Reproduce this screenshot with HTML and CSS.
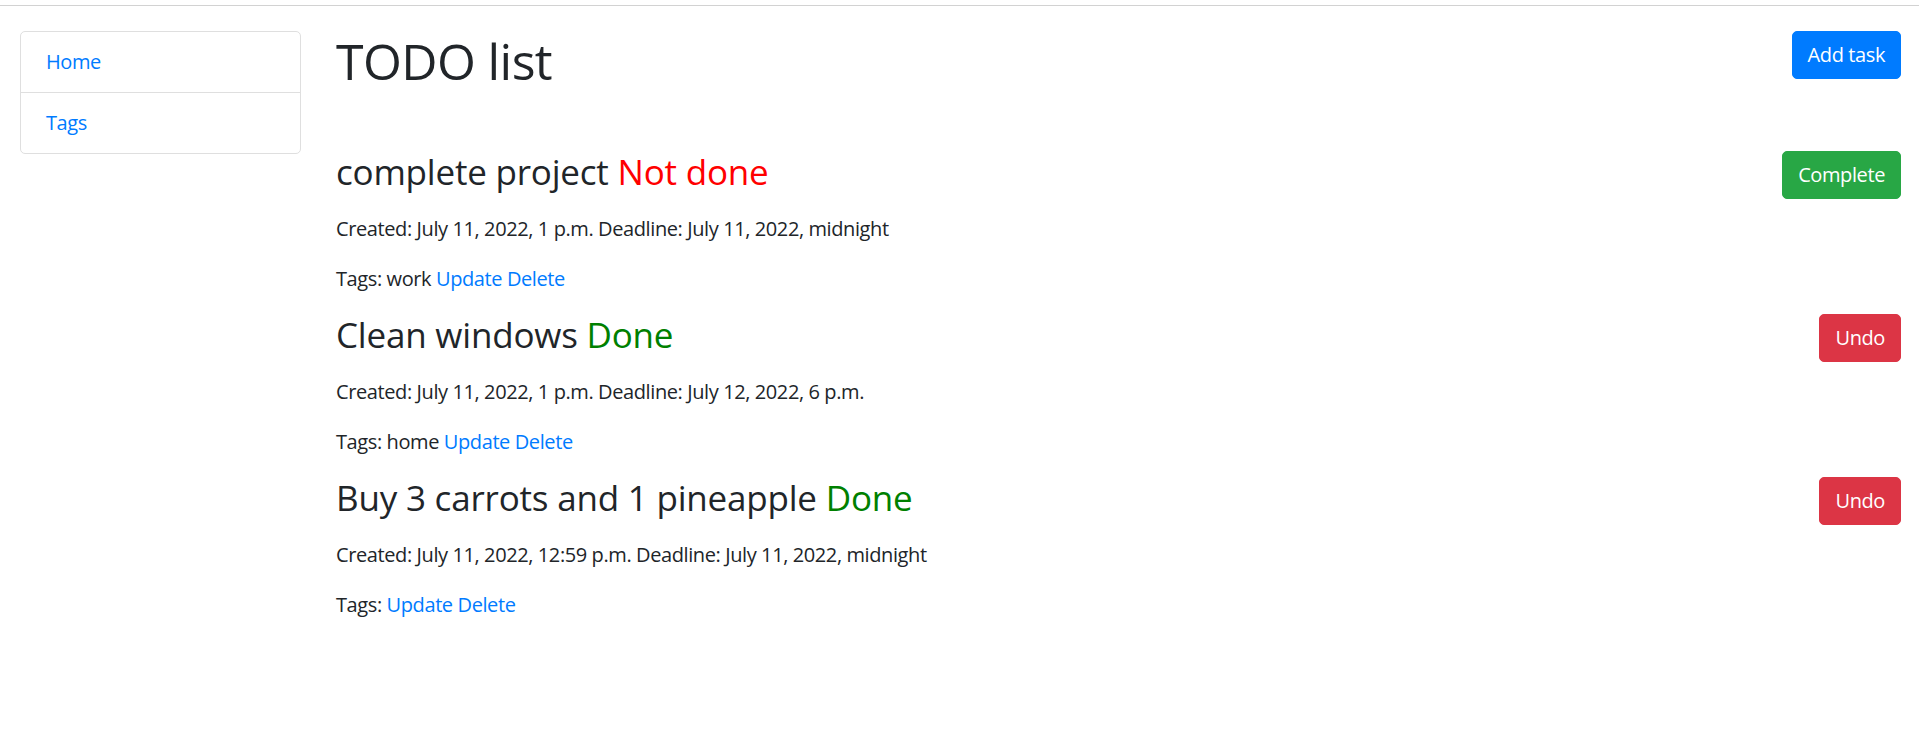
FILE: index.html
```html
<!DOCTYPE html>
<html lang="en">
<head>
<meta charset="utf-8">
<title>TODO list</title>
<link rel="stylesheet" href="styles.css">
</head>
<body>
<div class="topline"></div>
<div class="page">
  <aside class="sidebar">
    <ul class="list-group">
      <li class="list-item"><a href="#">Home</a></li>
      <li class="list-item"><a href="#">Tags</a></li>
    </ul>
  </aside>
  <main class="main">
    <div class="header">
      <h1 class="title">TODO list</h1>
      <a href="#" class="btn btn-primary">Add task</a>
    </div>
    <div class="tasks">
      <div class="task">
        <div class="task-head">
          <h3 class="task-title">complete project <span class="status-no">Not done</span></h3>
          <a href="#" class="btn btn-success">Complete</a>
        </div>
        <p class="meta">Created: July 11, 2022, 1 p.m. Deadline: July 11, 2022, midnight</p>
        <p class="meta">Tags: work <a href="#">Update</a> <a href="#">Delete</a></p>
      </div>
      <div class="task">
        <div class="task-head">
          <h3 class="task-title">Clean windows <span class="status-yes">Done</span></h3>
          <a href="#" class="btn btn-danger">Undo</a>
        </div>
        <p class="meta">Created: July 11, 2022, 1 p.m. Deadline: July 12, 2022, 6 p.m.</p>
        <p class="meta">Tags: home <a href="#">Update</a> <a href="#">Delete</a></p>
      </div>
      <div class="task">
        <div class="task-head">
          <h3 class="task-title">Buy 3 carrots and 1 pineapple <span class="status-yes">Done</span></h3>
          <a href="#" class="btn btn-danger">Undo</a>
        </div>
        <p class="meta">Created: July 11, 2022, 12:59 p.m. Deadline: July 11, 2022, midnight</p>
        <p class="meta">Tags: <a href="#">Update</a> <a href="#">Delete</a></p>
      </div>
    </div>
  </main>
</div>
</body>
</html>
```
FILE: styles.css
```css
* { box-sizing: border-box; }
html, body { margin: 0; padding: 0; background: #fff; }
body {
  font-family: "Open Sans", "Noto Sans", "Liberation Sans", sans-serif;
  font-size: 20px;
  line-height: 30px;
  letter-spacing: -0.4px;
  color: #212529;
}
a { color: #007bff; text-decoration: none; }

.topline {
  height: 6px;
  border-bottom: 1px solid #d2d2d2;
}

.page {
  display: flex;
  align-items: flex-start;
  padding: 25px 18px 0 20px;
}

.sidebar { flex: 0 0 281px; }
.list-group {
  list-style: none;
  margin: 0;
  padding: 0;
  border: 1px solid #dfdfdf;
  border-radius: 5px;
}
.list-item {
  padding: 15px 25px;
  line-height: 30px;
}
.list-item + .list-item { border-top: 1px solid #dfdfdf; }

.main {
  flex: 1;
  margin-left: 35px;
}

.header {
  display: flex;
  justify-content: space-between;
  align-items: flex-start;
  margin-bottom: 60px;
}
.title {
  margin: 0;
  font-size: 50px;
  line-height: 60px;
  font-weight: 400;
  letter-spacing: -0.6px;
}

.btn {
  display: inline-block;
  padding: 8px 15px;
  border: 1px solid transparent;
  border-radius: 5px;
  font-size: 20px;
  line-height: 30px;
  color: #fff;
  white-space: nowrap;
}
.btn-primary { background: #007bff; border-color: #007bff; }
.btn-success { background: #28a745; border-color: #28a745; }
.btn-danger { background: #dc3545; border-color: #dc3545; }

.task-head {
  display: flex;
  justify-content: space-between;
  align-items: flex-start;
  margin-bottom: 15px;
}
.task-title {
  margin: 0;
  font-size: 35px;
  line-height: 42px;
  font-weight: 400;
  letter-spacing: -0.2px;
}
.status-no { color: #ff0000; }
.status-yes { color: #008000; }

.meta {
  margin: 0 0 20px;
}
```
